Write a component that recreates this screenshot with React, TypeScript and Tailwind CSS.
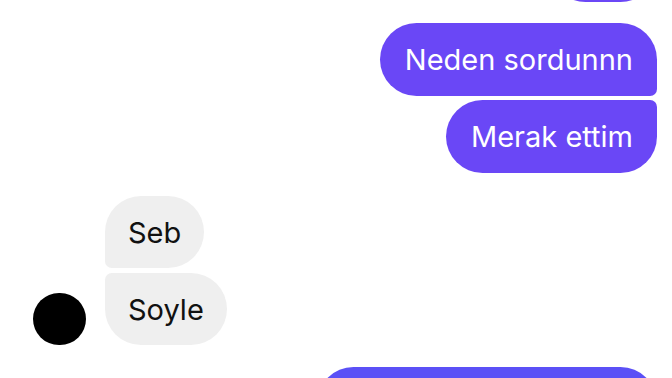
import React from 'react';

interface Msg {
  text: string;
  shape: string;
}

const sent: Msg[] = [
  { text: 'Neden sordunnn', shape: 'rounded-[37px] rounded-br-[7px]' },
  { text: 'Merak ettim', shape: 'rounded-[37px] rounded-tr-[7px]' },
];

const received: Msg[] = [
  { text: 'Seb', shape: 'rounded-[37px] rounded-bl-[7px]' },
  { text: 'Soyle', shape: 'rounded-[37px] rounded-tl-[7px]' },
];

export default function App() {
  return (
    <div className="w-[672px] h-[378px] overflow-hidden bg-white font-['Inter',sans-serif] text-[29px] leading-none">
      <div className="flex flex-col items-end pr-[15px]">
        {/* tail of the previous message */}
        <div className="-mt-[71px] w-[108px] h-[73px] rounded-[37px] bg-[#6b47f6]" />

        <div className="mt-[21px] flex flex-col items-end gap-[4px]">
          {sent.map((m) => (
            <div
              key={m.text}
              className={`h-[73px] pl-[25px] pr-[24px] flex items-center bg-[#6a47f6] text-white ${m.shape}`}
            >
              {m.text}
            </div>
          ))}
        </div>
      </div>

      <div className="mt-[23px] flex items-end gap-[19px] pl-[33px]">
        <div className="w-[53px] h-[52px] rounded-full bg-black" />
        <div className="flex flex-col items-start gap-[5px]">
          {received.map((m) => (
            <div
              key={m.text}
              className={`h-[72px] px-[23px] flex items-center bg-[#efefef] text-[#111] ${m.shape}`}
            >
              {m.text}
            </div>
          ))}
        </div>
      </div>

      <div className="mt-[22px] flex justify-end pr-[15px]">
        <div className="w-[340px] h-[73px] rounded-[37px] bg-[#5b50f6]" />
      </div>
    </div>
  );
}
